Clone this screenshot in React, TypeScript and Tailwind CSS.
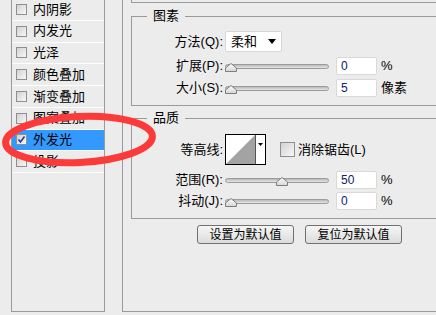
import React from "react";

const layers = ["内阴影", "内发光", "光泽", "颜色叠加", "渐变叠加", "图案叠加", "外发光", "投影"];
const SELECTED = 6;

const CheckBox = ({ checked = false, size = "w-[11px] h-[11px]" }: { checked?: boolean; size?: string }) => (
  <span
    className={`${size} shrink-0 border border-[#8e8f8f] bg-gradient-to-br from-[#d2d2d2] to-[#f8f8f8] flex items-center justify-center`}
  >
    {checked && (
      <svg width="9" height="9" viewBox="0 0 9 9">
        <path d="M1.5 4.5 L3.5 7 L7.5 1.5" stroke="#2a3a8c" strokeWidth="1.6" fill="none" />
      </svg>
    )}
  </span>
);

const Thumb = () => (
  <svg width="12" height="9" viewBox="0 0 12 9">
    <defs>
      <linearGradient id="tg" x1="0" y1="0" x2="0" y2="1">
        <stop offset="0" stopColor="#ffffff" />
        <stop offset="1" stopColor="#d4d4d4" />
      </linearGradient>
    </defs>
    <polygon points="6,0.5 11.5,5 11.5,8.5 0.5,8.5 0.5,5" fill="url(#tg)" stroke="#7d7d7d" />
  </svg>
);

const Slider = ({ pct }: { pct: number }) => (
  <div className="relative w-[104px] h-[10px] flex items-center">
    <div className="w-full h-[5px] rounded-full border border-[#9c9c9c] bg-gradient-to-b from-[#b9b9b9] to-[#e6e6e6]" />
    <div className="absolute top-[2px]" style={{ left: `${pct * 0.9}%` }}>
      <Thumb />
    </div>
  </div>
);

const Field = ({ value }: { value: string }) => (
  <div className="w-[41px] h-[18px] bg-white border border-[#d9d9d9] rounded-[2px] pl-[4px] text-[12px] leading-[16px] text-[#10206a]">
    {value}
  </div>
);

const Label = ({ children }: { children: React.ReactNode }) => (
  <div className="w-[93px] pr-[2px] text-right text-[13px] text-black whitespace-nowrap">{children}</div>
);

const SliderRow = ({ label, value, pct, unit }: { label: string; value: string; pct: number; unit: string }) => (
  <div className="flex items-center h-[18px]">
    <Label>{label}</Label>
    <Slider pct={pct} />
    <div className="ml-[7px]">
      <Field value={value} />
    </div>
    <span className="ml-[4px] text-[13px] text-black">{unit}</span>
  </div>
);

export default function App() {
  return (
    <div className="relative w-[436px] h-[315px] overflow-hidden bg-[#ececec] flex font-['Liberation_Sans','Noto_Sans_CJK_SC',sans-serif]">
      {/* 样式列表 */}
      <div className="ml-[11px] w-[94px] h-[312px] border-x border-b border-[#9a9a9a] shrink-0">
        <div className="-mt-[1px]">
          {layers.map((name, i) => (
            <div
              key={name}
              className={`h-[21.75px] flex items-center gap-[6px] pl-[4px] border-b border-white text-[13px] text-black ${
                i === SELECTED ? "bg-[#3399ff]" : ""
              }`}
            >
              <CheckBox checked={i === SELECTED} />
              <span>{name}</span>
            </div>
          ))}
        </div>
      </div>

      {/* 外发光设置 */}
      <div className="ml-[17px] w-[330px] h-[312px] border-l border-b border-[#9a9a9a] pl-[8px] shrink-0">
        <div className="h-[3px] border-l border-b border-[#9a9a9a]" />

        <fieldset className="mt-[4px] h-[99px] border-l border-t border-b border-[#9a9a9a] min-w-0">
          <legend className="ml-[15px] px-[6px] text-[13px] leading-[18px] text-black">图素</legend>
          <div className="flex flex-col mt-[6px]">
            <div className="flex items-center h-[21px]">
              <Label>方法(Q):</Label>
              <div className="w-[57px] h-[21px] bg-white border border-[#d7d7d7] rounded-[2px] flex items-center justify-between px-[5px] text-[13px] text-black">
                <span>柔和</span>
                <svg width="8" height="5" viewBox="0 0 8 5">
                  <polygon points="0,0 8,0 4,5" fill="#000" />
                </svg>
              </div>
            </div>
            <div className="mt-[5px]">
              <SliderRow label="扩展(P):" value="0" pct={0} unit="%" />
            </div>
            <div className="mt-[4px]">
              <SliderRow label="大小(S):" value="5" pct={0} unit="像素" />
            </div>
          </div>
        </fieldset>

        <fieldset className="mt-[3px] h-[110px] border-l border-t border-b border-[#9a9a9a] min-w-0">
          <legend className="ml-[15px] px-[6px] text-[13px] leading-[18px] text-black">品质</legend>
          <div className="flex items-center mt-[7px] h-[31px]">
            <Label>等高线:</Label>
            <div className="w-[41px] h-[31px] border border-black bg-white flex">
              <svg width="29" height="29" viewBox="0 0 29 29">
                <polygon points="0,29 29,0 29,29" fill="#a3a3a3" />
              </svg>
              <div className="flex-1 border-l border-[#555] flex justify-center pt-[8px]">
                <svg width="5" height="3" viewBox="0 0 5 3">
                  <polygon points="0,0 5,0 2.5,3" fill="#000" />
                </svg>
              </div>
            </div>
            <div className="ml-[14px] flex items-center gap-[3px]">
              <CheckBox size="w-[15px] h-[15px]" />
              <span className="text-[13px] text-black">消除锯齿(L)</span>
            </div>
          </div>
          <div className="flex flex-col gap-[3px] mt-[6px]">
            <SliderRow label="范围(R):" value="50" pct={55} unit="%" />
            <SliderRow label="抖动(J):" value="0" pct={0} unit="%" />
          </div>
        </fieldset>

        <div className="flex gap-[11px] mt-[6px] ml-[66px]">
          {["设置为默认值", "复位为默认值"].map((t) => (
            <button
              key={t}
              className="w-[97px] h-[19px] rounded-[3px] border border-[#707070] bg-gradient-to-b from-[#f6f6f6] to-[#dcdcdc] text-[12px] leading-[16px] text-black"
            >
              {t}
            </button>
          ))}
        </div>
      </div>

      {/* 红色圈注 */}
      <svg className="absolute left-0 top-0 pointer-events-none" width="436" height="315" viewBox="0 0 436 315">
        <ellipse
          cx="79"
          cy="139.5"
          rx="73.5"
          ry="23"
          transform="rotate(-2.6 79 139.5)"
          fill="none"
          stroke="#fd3a3a"
          strokeWidth="7"
        />
      </svg>
    </div>
  );
}
